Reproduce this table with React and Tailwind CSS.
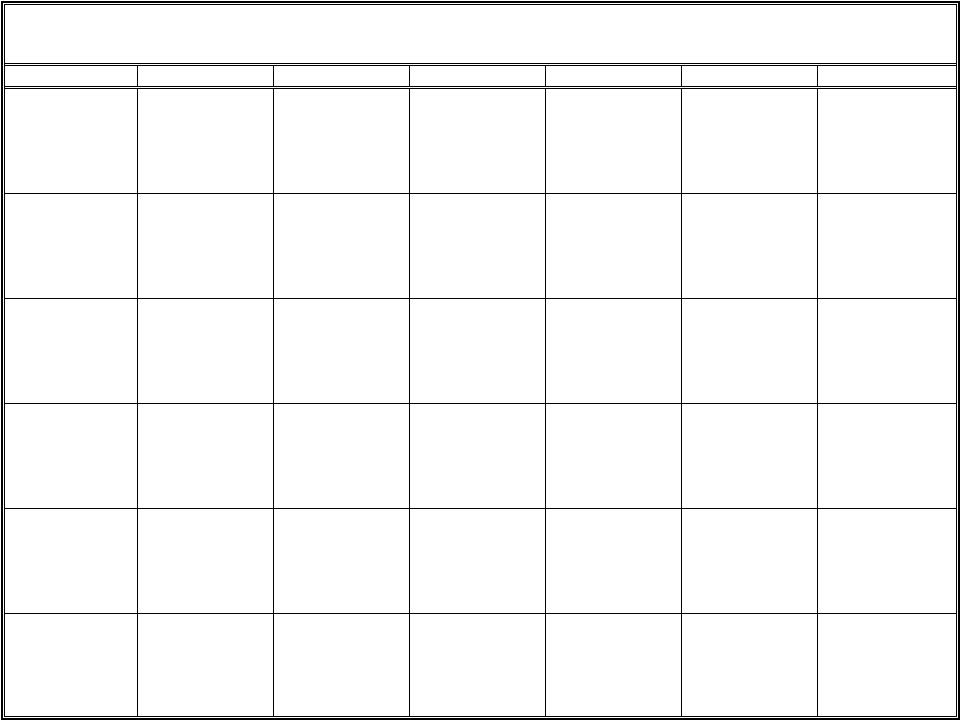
import React from "react";

const cols = "grid grid-cols-[132px_repeat(5,135px)_138px] gap-px bg-black";

export default function App() {
  const days = Array.from({ length: 7 });
  const cells = Array.from({ length: 42 });
  return (
    <div className="w-[960px] h-[720px] bg-white pt-[1px] pl-[1px]" style={{ fontFamily: '"Liberation Sans", Arial, sans-serif' }}>
      <div className="w-[959px] h-[719px] border-2 border-black p-px bg-white">
        <div className="h-full border border-black flex flex-col bg-white">
          <div className="h-[58px] bg-white" />
          <div className="h-[3px] border-y border-black bg-white" />
          <div className={`${cols} h-[20px]`}>
            {days.map((_, i) => (
              <div key={i} className="bg-white" />
            ))}
          </div>
          <div className="h-[3px] border-y border-black bg-white" />
          <div className={`${cols} flex-1 grid-rows-[repeat(5,104px)_1fr]`}>
            {cells.map((_, i) => (
              <div key={i} className="bg-white" />
            ))}
          </div>
        </div>
      </div>
    </div>
  );
}
